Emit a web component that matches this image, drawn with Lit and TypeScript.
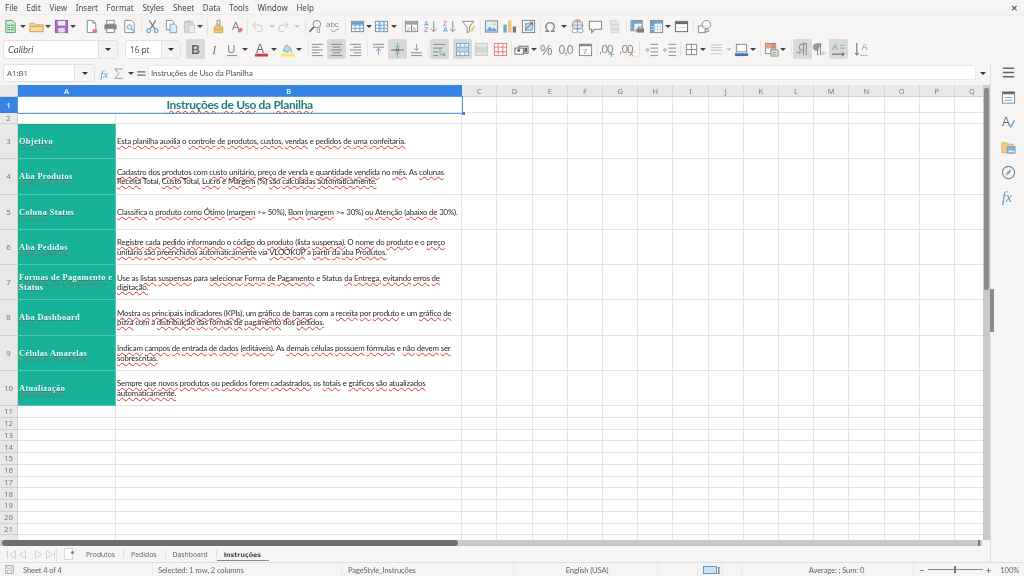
import { LitElement, html, css, svg } from "lit";
import { customElement } from "lit/decorators.js";

const G = "#767676", B = "#5a9bcf", LB = "#b4d2ea", R = "#d96a6a", Y = "#f0c060";
const lines = (ys: number[], x1: number, x2: number, c = G) =>
  ys.map((y) => svg`<path d="M${x1} ${y}H${x2}" stroke=${c} fill="none"/>`);
const tbl = (hl: string) => svg`<rect x="1.500" y="2.500" width="13" height="11" fill="#fff" stroke=${G}/>
  ${hl === "r" ? svg`<rect x="2" y="3" width="12" height="3" fill=${B}/>` : svg`<rect x="5" y="3" width="3" height="10" fill=${LB}/><rect x="10" y="3" width="2" height="10" fill=${LB}/>`}
  <path d="M1.500 6.500h13M1.500 10h13M5.500 2.500v11M10.500 2.500v11" stroke=${B} fill="none"/>`;

const icons: Record<string, unknown> = {
  new: svg`<path d="M3 1.500h7l3 3v10H3z" fill="#cfe8cf" stroke="#3f9a52"/><rect x="4.500" y="6" width="7" height="6" fill="#43a85a"/><path d="M4.500 8h7M4.500 10h7M8 6v6" stroke="#e8f6ea"/>`,
  open: svg`<path d="M1 4.500h5l1.500 1.500H15v7.500H1z" fill="#f4c878" stroke="#d2a04c"/><path d="M1 8h14v5.500H1z" fill="#f8d89a" stroke="#d2a04c"/>`,
  save: svg`<rect x="1.500" y="1.500" width="13" height="13" fill="#9a5cb8" stroke="#7e4799"/><rect x="4" y="2" width="8" height="5" fill="#f1e8f5"/><rect x="4.500" y="9.500" width="7" height="5" fill="#e4d4ec"/>`,
  pdf: svg`<path d="M3.500 1.500h6l3 3v10h-9z" fill="#fff" stroke=${G}/><path d="M9.500 1.500v3h3" fill="none" stroke=${G}/><path d="M9 11h5v3.500H9z" fill=${R}/>`,
  print: svg`<rect x="4" y="1.500" width="8" height="4" fill="#fff" stroke=${G}/><rect x="1.500" y="5.500" width="13" height="6" rx="1.500" fill="#757575"/><rect x="4" y="10" width="8" height="4.500" fill="#fff" stroke=${G}/>`,
  prev: svg`<path d="M3 1.500h7l3 3v10H3z" fill="#fff" stroke=${G}/><circle cx="8" cy="8.500" r="2.500" fill="#d8ebf7" stroke=${B}/><path d="M10 10.500l2.500 2.500" stroke=${B} fill="none" stroke-width="1.300"/>`,
  cut: svg`<path d="M4.500 1.500l6 9M11.500 1.500l-6 9" stroke="#666" fill="none" stroke-width="1.200"/><circle cx="4" cy="12.500" r="2" fill="none" stroke=${B} stroke-width="1.300"/><circle cx="12" cy="12.500" r="2" fill="none" stroke=${B} stroke-width="1.300"/>`,
  copy: svg`<path d="M2.500 1.500h6l2 2v8h-8z" fill="#fff" stroke=${G}/><path d="M6.500 5.500h5l2 2v7h-7z" fill="#d8ebf7" stroke=${B}/>`,
  paste: svg`<rect x="2.500" y="2.500" width="9" height="11.500" fill="#d6d6d6" stroke="#bbb"/><rect x="5" y="1.500" width="4" height="2.500" fill="#bbb"/><rect x="7.500" y="6.500" width="6" height="8" fill="#ececec" stroke="#c4c4c4"/>`,
  clone: svg`<path d="M6.500 1.500h3v5h-3z" fill="#fff" stroke=${G}/><path d="M3.500 8.500c2-2 7-2 9 0v6h-9z" fill=${Y} stroke="#c99a40"/><path d="M3.500 11h9" stroke="#c99a40"/>`,
  clear: svg`<text x="2" y="12" font-size="12" font-family="Liberation Sans" fill=${G}>A</text><path d="M8 13l3-4 3 2-2.500 3.500H9z" fill=${R}/>`,
  undo: svg`<path d="M3 6.500h6.500a3.500 3.500 0 0 1 0 7H7M3 6.500l3.500-3.500M3 6.500L6.500 10" stroke="#cfcfcf" fill="none" stroke-width="1.300"/>`,
  redo: svg`<path d="M13 6.500H6.500a3.500 3.500 0 0 0 0 7H9M13 6.500L9.500 3M13 6.500L9.500 10" stroke="#cfcfcf" fill="none" stroke-width="1.300"/>`,
  find: svg`<circle cx="9.500" cy="5.500" r="4" fill="#f7f7f7" stroke=${G}/><path d="M6.500 8.500L1.500 13.500" stroke="#555" stroke-width="1.800"/><text x="9" y="15" font-size="7" font-family="Liberation Sans" fill=${G}>d</text>`,
  spell: svg`<text x="0" y="9" font-size="8.500" font-family="Liberation Sans" fill=${G}>abc</text><path d="M5 11l2.500 3L14 10" stroke=${B} fill="none"/>`,
  rows: tbl("r"),
  cols: tbl("c"),
  freezeh: svg`<rect x="1.500" y="2.500" width="13" height="11" fill="#fff" stroke=${G}/><rect x="2" y="3" width="12" height="3" fill="#999"/><text x="3" y="12.500" font-size="6" font-family="Liberation Sans" fill=${B}>2</text><text x="9" y="12.500" font-size="6" font-family="Liberation Sans" fill=${R}>A</text><path d="M8 6v7" stroke=${G}/>`,
  az: svg`<text x="1" y="7" font-size="7" font-weight="700" font-family="Liberation Sans" fill="#5aa3d8">A</text><text x="1" y="14" font-size="7" font-weight="700" font-family="Liberation Sans" fill="#b07fcf">Z</text><path d="M11.500 2v11M8.500 10.500l3 3 3-3" stroke=${G} fill="none"/>`,
  za: svg`<text x="1" y="7" font-size="7" font-weight="700" font-family="Liberation Sans" fill="#b07fcf">Z</text><text x="1" y="14" font-size="7" font-weight="700" font-family="Liberation Sans" fill="#5aa3d8">A</text><path d="M11.500 2v11M8.500 10.500l3 3 3-3" stroke=${G} fill="none"/>`,
  filter: svg`<path d="M1.500 2.500h12L9 8.500v5l-2.500 1v-6z" fill="#fff" stroke=${G}/><path d="M10 12l4-5 1 1-3 6z" fill=${Y}/>`,
  image: svg`<rect x="1.500" y="2" width="13" height="12" fill="#dcecf7" stroke=${G}/><path d="M2 13l4-5 3 3 2-2 3 4z" fill=${B}/><circle cx="11" cy="5.500" r="1.300" fill=${Y}/>`,
  chart: svg`<rect x="1.500" y="6" width="3.500" height="8.500" fill=${B}/><rect x="6.500" y="1.500" width="3.500" height="13" fill=${Y}/><rect x="11.500" y="8" width="3.500" height="6.500" fill="#666"/>`,
  pivot: svg`<rect x="1.500" y="1.500" width="13" height="13" fill="#f4f4f4" stroke=${G}/><rect x="5" y="5" width="7" height="7" fill=${LB} stroke=${B}/><path d="M4 12l8-8M9 3.500h3.500V7" stroke="#555" fill="none"/>`,
  omega: svg`<text x="0.500" y="14" font-size="15.500" font-family="DejaVu Sans" fill=${G}>Ω</text>`,
  link: svg`<circle cx="8" cy="6.500" r="5.500" fill="#e8e8e8" stroke=${G}/><path d="M2.500 6.500h11M8 1v11M4.500 3h7M4.500 10h7" stroke=${G} fill="none" stroke-width=".7"/><rect x="2" y="10.500" width="6" height="4" rx="2" fill="#fff" stroke=${B}/><rect x="8" y="10.500" width="6" height="4" rx="2" fill="#fff" stroke=${B}/>`,
  comment: svg`<path d="M1.500 2.500h13v8.500H7l-3 3.500V11H1.500z" fill="#fff" stroke=${G} stroke-width="1.100"/>`,
  hf: svg`<path d="M3.500 1.500h6.500l2.500 2.500v10.500h-9z" fill="#e2e2e2" stroke="#d0d0d0"/><path d="M5 6h6M5 11h6" stroke="#c4c4c4"/>`,
  area: svg`<rect x="1" y="1.500" width="12" height="11" fill="#e8f2fa" stroke=${G}/><rect x="1.500" y="2" width="11" height="3" fill=${B}/><rect x="1.500" y="2" width="3" height="10" fill=${B}/><path d="M7 10h8v4.500H7z" fill="#6f6f6f"/><rect x="9" y="8.500" width="4" height="2" fill="#fff" stroke=${G}/>`,
  freeze: svg`<rect x="1.500" y="1.500" width="13" height="13" fill="#fff" stroke=${G}/><rect x="2" y="2" width="12" height="3" fill=${B}/><rect x="2" y="2" width="4" height="12" fill=${B}/><path d="M2 8h12M2 11h12M9 5v9M12 5v9" stroke=${LB} fill="none"/>`,
  split: svg`<rect x="1.500" y="2.500" width="13" height="11" fill="#fff" stroke="#555"/><rect x="2" y="3" width="12" height="2.500" fill="#555"/><path d="M3 9h10" stroke=${LB} stroke-dasharray="2 1"/>`,
  shapes: svg`<path d="M1.500 7.500h8v7h-8z" fill="#fff" stroke=${G}/><circle cx="10" cy="6" r="4.500" fill="#fff" fill-opacity=".6" stroke=${G}/><path d="M8 13l2.500-3 2.500 3z" fill="#fff" stroke=${G}/>`,
  B: svg`<text x="3.500" y="13" font-size="13" font-weight="700" font-family="Liberation Sans" fill="#555">B</text>`,
  I: svg`<text x="5.500" y="13" font-size="13" font-style="italic" font-family="Liberation Serif" fill="#666">I</text>`,
  U: svg`<text x="2.500" y="12" font-size="12" font-family="Liberation Sans" fill="#55779a">U</text><path d="M2 14.500h11" stroke="#55779a"/>`,
  fc: svg`<text x="2" y="11.500" font-size="13" font-family="Liberation Sans" fill="#555">A</text><rect x="1" y="12.500" width="14" height="3" fill="#c62828"/>`,
  bg: svg`<path d="M3 9l4-6 5 4-4 4z" fill=${LB} stroke=${B}/><path d="M11 8c1 1.500 2 2 1 3.500" stroke="#888" fill="none"/><rect x="1" y="12.500" width="14" height="3" fill="#f4ee3a"/>`,
  al: svg`${lines([5.5, 11.5], 2, 10)}<path d="M2 2.500h12M2 8.500h12M2 14.500h12" stroke=${G}/>`,
  ac: svg`${lines([5.5, 11.5], 4, 12)}<path d="M2 2.500h12M2 8.500h12M2 14.500h12" stroke=${G}/>`,
  ar: svg`${lines([5.5, 11.5], 6, 14)}<path d="M2 2.500h12M2 8.500h12M2 14.500h12" stroke=${G}/>`,
  vt: svg`<path d="M2 2.500h12M2 5.500h12" stroke=${G}/><path d="M8 14V7M5.500 9.500L8 7l2.500 2.500" stroke=${B} fill="none"/>`,
  vc: svg`<path d="M1 8.500h14" stroke=${G} stroke-width="1.300"/><path d="M8 1v5M8 16v-5M5.500 4L8 6.500 10.500 4M5.500 13L8 10.500 10.500 13" stroke=${B} fill="none"/><rect x="6" y="7" width="4" height="3" fill=${G}/>`,
  vb: svg`<path d="M2 11.500h12M2 14.500h12" stroke=${G}/><path d="M8 2v7M5.500 6.500L8 9l2.500-2.500" stroke=${B} fill="none"/>`,
  wrap: svg`<path d="M1.500 2.500h13M1.500 6.500h10M1.500 10.500h5M1.500 14.500h5" stroke=${G}/><path d="M8.500 7v6M8.500 13.500h6M11 11l3.500 2.500L11 15" stroke=${B} fill="none"/>`,
  merge: svg`<rect x="1.500" y="1.500" width="13" height="13" fill="#fff" stroke=${B}/><rect x="2" y="6" width="12" height="4" fill=${LB}/><path d="M1.500 5.500h13M1.500 10.500h13M5.500 2v3M10.500 2v3M5.500 11v3M10.500 11v3" stroke=${B}/>`,
  mergeg: svg`<rect x="1.500" y="1.500" width="13" height="13" fill="#e6e6e6" stroke="#c4c4c4"/><path d="M1.500 5.500h13M1.500 10.500h13" stroke="#c4c4c4"/><rect x="2" y="6" width="12" height="4" fill="#d2d2d2"/>`,
  unmerge: svg`<rect x="1.500" y="1.500" width="13" height="13" fill="#fff" stroke=${R}/><path d="M1.500 5.500h13M1.500 10.500h13M5.500 2v12M10.500 2v12" stroke=${R}/>`,
  cur: svg`<rect x="5" y="4.500" width="10" height="7.500" fill="#fff" stroke="#555"/><rect x="1" y="6.500" width="9" height="6.500" fill="#fff" stroke="#555"/><circle cx="5" cy="9" r="1.500" fill="#444"/><rect x="11" y="6" width="3" height="5" fill="#555"/>`,
  pct: svg`<text x="0" y="13.500" font-size="15" font-family="Liberation Sans" fill=${G}>%</text>`,
  num: svg`<text x="-.5" y="13" font-size="13" letter-spacing="-1" font-family="Liberation Sans" fill=${G}>0,0</text>`,
  date: svg`<rect x="1.500" y="2.500" width="13" height="12" fill="#fff" stroke=${G}/><rect x="1.500" y="2" width="13" height="2.500" fill=${G}/><text x="5" y="13" font-size="8.500" font-family="Liberation Sans" fill=${G}>7</text>`,
  addd: svg`<text x="-1" y="12" font-size="12.500" letter-spacing="-1" font-family="Liberation Sans" fill=${G}>,00</text><path d="M12 10v6M9 13h6" stroke=${B}/>`,
  deld: svg`<text x="-1" y="12" font-size="12.500" letter-spacing="-1" font-family="Liberation Sans" fill=${G}>,00</text><path d="M9.500 10.500l5 5M14.500 10.500l-5 5" stroke=${R}/>`,
  ind: svg`<path d="M7 2.500h8M7 6.500h8M7 10.500h8M7 14.500h8" stroke=${G}/><path d="M1 8.500h4M3.500 6.500l2 2-2 2" stroke=${B} fill="none"/>`,
  out: svg`<path d="M7 2.500h8M7 6.500h8M7 10.500h8M7 14.500h8" stroke=${G}/><path d="M5.500 8.500h-4M3.500 6.500l-2 2 2 2" stroke=${B} fill="none"/>`,
  bord: svg`<rect x="2.500" y="2.500" width="11" height="11" fill="#fff" stroke=${G}/><path d="M8 2.500v11M2.500 8h11" stroke=${G}/>`,
  bsty: svg`<path d="M2 3h12M2 6h12M2 9h12M2 12.500h12" stroke="#c6c6c6" stroke-width="1.200"/>`,
  bcol: svg`<rect x="2.500" y="2.500" width="11" height="8" fill="#fff" stroke=${G}/><rect x="1" y="12" width="14" height="3" fill="#2a63a8"/>`,
  cond: svg`<rect x="1.500" y="1.500" width="11" height="11" fill="#fff" stroke=${G}/><rect x="2" y="2" width="5" height="5" fill="#e69a6a"/><rect x="7" y="7" width="5" height="5" fill="#7fb66b"/><rect x="7" y="2" width="5" height="5" fill="#d97a7a"/><rect x="7.500" y="8.500" width="7.500" height="6.500" fill="#fff" stroke=${G}/><path d="M9 11h4.500M9 13h4.500" stroke=${G}/>`,
  ltr: svg`<path d="M9 14V2M12 14V2M12.500 2H8a3.500 3.500 0 0 0 0 7h1" stroke=${G} fill="none"/><path d="M1 11h5M4 9l2 2-2 2" stroke=${B} fill="none"/>`,
  rtl: svg`<path d="M5 14V2M8 14V2M9 2H4a3.500 3.500 0 0 0 0 7h1" stroke=${G} fill="#999"/><path d="M14.500 12h-5M11.500 10l-2 2 2 2" stroke="#8fc0d8" fill="none"/>`,
  tdir: svg`<text x="1" y="8.500" font-size="9.500" font-family="Liberation Sans" fill=${B}>A</text><path d="M10 3.500h5M10 6.500h5" stroke=${G} stroke-dasharray="1.500 1"/><path d="M1 13h13M11.500 11l2.500 2-2.500 2" stroke="#444" fill="none"/>`,
  vdir: svg`<text x="8" y="8.500" font-size="9.500" font-family="Liberation Sans" fill=${B}>A</text><path d="M3 1v13M1 11.500l2 2.500 2-2.500" stroke="#444" fill="none"/><path d="M7 14.500h8" stroke=${G} stroke-dasharray="1.500 1"/>`,
  fx: svg`<text x="1.500" y="13" font-size="14" font-style="italic" font-family="Liberation Serif" fill="#4a90c8">fx</text>`,
  sum: svg`<path d="M12.500 3.500v-1h-9l5 5.500-5 6h9v-1" stroke=${G} fill="none"/>`,
  eq: svg`<path d="M3 6h10M3 10h10" stroke="#555" stroke-width="1.400"/>`,
  side: svg`<path d="M2 3.500h12M2 8h12M2 12.500h12" stroke="#555" stroke-width="1.500"/>`,
  props: svg`<rect x="1.500" y="2" width="13" height="12" fill="#fff" stroke=${G}/><rect x="1.500" y="2" width="13" height="2.500" fill="#555"/><path d="M4 8h8M4 11h8" stroke=${B}/>`,
  sty: svg`<text x="1" y="11.500" font-size="13" font-family="Liberation Sans" fill="#5a5a5a">A</text><path d="M9 13l5-8 1 .8-4.500 8z" fill=${B}/>`,
  gal: svg`<path d="M1 3h5l1.500 1.500H13v9H1z" fill="#f4c878" stroke="#d2a04c"/><rect x="6.500" y="7" width="8.500" height="7" fill="#6ea6d2" stroke=${B}/><path d="M7 13l3-3 2 2 1.500-1 1 2z" fill="#dcecf7"/>`,
  nav: svg`<circle cx="8" cy="8" r="6.500" fill="#f4f4f4" stroke=${G} stroke-width="1.200"/><path d="M11.500 4.500L9 9 4.500 11.500 7 7z" fill=${B}/>`,
  fxs: svg`<text x="1" y="13" font-size="15" font-style="italic" font-family="Liberation Serif" fill="#3d8ac4">fx</text>`,
  disk: svg`<rect x="2" y="2" width="12" height="12" fill="none" stroke="#999"/><rect x="4.500" y="2" width="7" height="4" fill="none" stroke="#999"/><rect x="4.500" y="9" width="7" height="5" fill="none" stroke="#999"/>`,
};

const ic = (n: string, cls = "ic") => html`<svg class=${cls} viewBox="0 0 16 16">${icons[n]}</svg>`;

const navArrows = html`<svg class="navsvg" viewBox="0 0 52 13">
  <g fill="none" stroke="#d2d2d2">
    <path d="M2.500 2.500v8M10.500 2.500l-6 4 6 4z"/>
    <path d="M20.500 2.500l-6 4 6 4z"/>
    <path d="M30.500 2.500l6 4-6 4z"/>
    <path d="M41.500 2.500l6 4-6 4zM49.500 2.500v8"/>
  </g>
</svg>`;

type Item = [string, number, boolean?];
const row1: Item[] = [["new",10],["a",23],["open",36],["a",48],["save",61],["a",73],["pdf",91],["print",110],["prev",129],["|",141],["cut",152],["copy",171],["paste",189],["a",200],["|",207],["clone",218],["clear",237],["|",247],["undo",257],["ag",272],["redo",283],["ag",297],["|",305],["find",315],["spell",333],["|",345],["rows",357],["a",369],["cols",381],["a",394],["|",402],["freezeh",411],["az",430],["za",449],["filter",468],["|",480],["image",491],["chart",509],["pivot",528],["|",540],["omega",551],["a",564],["link",577],["comment",595],["hf",614],["|",626],["area",637],["freeze",656],["a",668],["split",681],["|",693],["shapes",704]];
const row2: Item[] = [["B",195,true],["I",214],["U",232],["a",245],["fc",261],["a",274],["bg",287],["a",299],["|",308],["al",317],["ac",336,true],["ar",355],["|",367],["vt",378],["vc",397,true],["vb",416],["|",428],["wrap",439,true],["merge",462,true],["mergeg",481],["unmerge",500],["|",511],["cur",521],["a",534],["pct",547],["num",566],["date",585],["|",597],["addd",607],["deld",627],["|",639],["ind",651],["out",669],["|",680],["bord",691],["a",703],["bsty",716],["ag",729],["bcol",741],["a",753],["|",760],["cond",771],["a",783],["|",791],["ltr",802,true],["rtl",820],["|",830],["tdir",838,true],["vdir",861]];

const strip = (items: Item[], start: number) => {
  let cur = start;
  return items.map(([n, x, on]) => {
    const w = n === "a" || n === "ag" ? 6 : n === "|" ? 1 : 19;
    const left = x - w / 2 - cur;
    cur = x + w / 2;
    const m = `margin-left:${left}px`;
    if (n === "a" || n === "ag") return html`<span class="caret ${n === "ag" ? "dim" : ""}" style=${m}></span>`;
    if (n === "|") return html`<span class="sep" style=${m}></span>`;
    return html`<span class="btn ${on ? "on" : ""}" style=${m}>${ic(n)}</span>`;
  });
};

const menus = ["File","Edit","View","Insert","Format","Styles","Sheet","Data","Tools","Window","Help"];
const colLetters = "CDEFGHIJKLMNOPQ".split("");

const word = (t: string) => t.split(" ").map((w, i) => {
  const sp = i ? " " : "";
  const m = /^(\(?)~(.*)$/.exec(w);
  return m ? html`${sp}${m[1]}<span class="sp">${m[2]}</span>` : html`${sp}${w}`;
});

const data: [string[], string[]][] = [
  [["~Objetivo"], ["~Esta ~planilha ~auxilia o ~controle ~de ~produtos, ~custos, ~vendas e ~pedidos ~de ~uma ~confeitaria."]],
  [["~Aba ~Produtos"], ["~Cadastro dos ~produtos com ~custo ~unitário, ~preço ~de ~venda e ~quantidade ~vendida no ~mês. As ~colunas", "~Receita Total, ~Custo Total, ~Lucro e ~Margem (%) ~são ~calculadas ~automaticamente."]],
  [["~Coluna Status"], ["~Classifica o ~produto ~como ~Ótimo (~margem >= 50%), ~Bom (~margem >= 30%) ~ou ~Atenção (~abaixo ~de 30%)."]],
  [["~Aba ~Pedidos"], ["~Registre ~cada ~pedido ~informando o ~código do ~produto (~lista ~suspensa). O ~nome do ~produto e o ~preço", "~unitário ~são ~preenchidos ~automaticamente via ~VLOOKUP a ~partir ~da ~aba ~Produtos."]],
  [["~Formas ~de ~Pagamento e", "Status"], ["Use as ~listas ~suspensas para ~selecionar ~Forma ~de ~Pagamento e Status ~da ~Entrega, ~evitando ~erros ~de", "~digitação."]],
  [["~Aba Dashboard"], ["~Mostra ~os ~principais ~indicadores (~KPIs), um ~gráfico ~de ~barras com a ~receita ~por ~produto e um ~gráfico ~de", "~pizza com a ~distribuição ~das ~formas ~de ~pagamento dos ~pedidos."]],
  [["~Células ~Amarelas"], ["~Indicam ~campos ~de ~entrada ~de ~dados (~editáveis). As ~demais ~células ~possuem ~fórmulas e ~não ~devem ~ser", "~sobrescritas."]],
  [["~Atualização"], ["~Sempre ~que ~novos ~produtos ~ou ~pedidos ~forem ~cadastrados, os ~totais e ~gráficos ~são ~atualizados", "~automaticamente."]],
];

@customElement("app-root")
export class AppRoot extends LitElement {
  static styles = css`
    :host { display: flex; flex-direction: column; width: 1024px; height: 576px; overflow: hidden; background: #f6f5f4; color: #444; font-family: "Noto Sans", sans-serif; filter: blur(0.3px); }
    * { box-sizing: border-box; }
    .menu { height: 14px; flex: none; display: flex; align-items: center; padding-left: 5px; gap: 8.700px; font-size: 8px; color: #4a4a4a; }
    .close { margin-left: auto; margin-right: 6px; font-size: 8px; font-weight: 700; color: #555; }
    .tb { display: flex; align-items: center; flex: none; }
    .tb1 { height: 24px; border-top: 1px solid #ebebeb; }
    .tb2 { height: 22px; }
    .gap4 { height: 4px; flex: none; }
    .btn { width: 19px; height: 20px; flex: none; display: flex; align-items: center; justify-content: center; border-radius: 2px; }
    .btn.on { background: #d9d9d8; }
    .ic { width: 15px; height: 15px; display: block; opacity: .88; }
    .caret { flex: none; width: 6px; height: 3px; border-left: 3px solid transparent; border-right: 3px solid transparent; border-top: 3px solid #444; }
    .caret.dim { border-top-color: #c8c8c8; }
    .sep { width: 1px; height: 16px; flex: none; background: #e6e5e4; }
    .combo { height: 19px; flex: none; background: #fff; border: 1px solid #e2e1e0; border-radius: 3px; display: flex; align-items: center; font-size: 8.200px; color: #555; }
    .combo .val { flex: 1; padding-left: 4px; white-space: nowrap; }
    .combo .dd { height: 100%; background: #f4f3f2; border-left: 1px solid #e2e1e0; display: flex; align-items: center; justify-content: center; }
    .font { width: 115px; margin-left: 3px; font-style: italic; font-family: "Lato", sans-serif; font-size: 9.500px; }
    .font .dd { width: 19px; }
    .size { width: 56px; margin-left: 7px; }
    .size .dd { width: 19px; }
    .dd i { display: block; width: 0; height: 0; border-left: 3.500px solid transparent; border-right: 3.500px solid transparent; border-top: 3.500px solid #333; }

    .body { flex: 1; display: flex; min-height: 0; }
    .left { width: 991px; flex: none; display: flex; flex-direction: column; border-right: 1px solid #e2e1e0; position: relative; }
    .side { flex: 1; display: flex; flex-direction: column; align-items: center; padding-top: .5px; gap: 10.200px; padding-left: 1px; }

    .handle { position: absolute; right: -4px; top: 225px; width: 4px; height: 43px; background: #8a8a8a; border-radius: 1px; }

    .fbar { height: 21px; flex: none; display: flex; align-items: flex-start; }
    .name { width: 92px; height: 18px; margin-left: 3px; }
    .name .dd { width: 19px; border-left: none; background: #f6f5f4; }
    .name .val { border-right: 1px solid #e2e1e0; height: 100%; display: flex; align-items: center; padding-left: 3px; font-size: 7.800px; }
    .fx { margin-left: 4px; }
    .fbtn { width: 13px; height: 18px; display: flex; align-items: center; justify-content: center; flex: none; }
    .fbtn .ic { width: 13px; height: 13px; }
    .fbar .caret { align-self: center; margin: 0 1px 3px 3px; }
    .input { flex: 1; height: 15px; margin-top: 1px; background: #fff; border: 1px solid #ebeaea; border-radius: 2px; font-family: "Lato", sans-serif; font-size: 8.200px; letter-spacing: -.12px; color: #555; padding-left: 2px; display: flex; align-items: center; }
    .fdrop { width: 14px; height: 18px; display: flex; align-items: center; justify-content: center; flex: none; }
    .fdrop i { display: block; border-left: 3.500px solid transparent; border-right: 3.500px solid transparent; border-top: 3.500px solid #333; }

    .area { flex: 1; display: flex; min-height: 0; }
    .gridwrap { width: 983px; flex: none; overflow: hidden; position: relative; background: #fff; }
    .grid { display: grid; grid-template-columns: 18px 98px 346.300px repeat(15, 35.200px); grid-template-rows: 12px 16px 11px repeat(8, 35.250px) repeat(12, 11.750px); width: max-content; }
    .cell { border-right: 1px solid #e4e4e4; border-bottom: 1px solid #e4e4e4; min-width: 0; }
    .hd { background: #e8e8e7; color: #777; font-size: 7.500px; display: flex; align-items: center; justify-content: center; border-right: 1px solid #d4d4d4; border-bottom: 1px solid #d0d0d0; }
    .hd.sel { background: #3584e4; color: #e8f1fb; font-weight: 600; border-color: #3584e4; }
    .rowh { font-size: 7.800px; }
    .corner { background: #e8e8e7; }
    .title { grid-column: 2 / 4; display: flex; align-items: center; justify-content: center; font-family: "Lato", sans-serif; font-weight: 700; font-size: 12px; letter-spacing: -.34px; color: #1f8279; padding-bottom: 1px; }
    .label { background: #17b298; color: #f2fbf8; font-family: "Liberation Serif", serif; font-weight: 700; font-size: 8.400px; letter-spacing: .35px; line-height: 10px; padding: 2px 0 0 1px; display: flex; flex-direction: column; justify-content: center; border-color: #55c8b3; white-space: nowrap; text-shadow: 0 .5px .5px rgba(40,70,60,.45); }
    .label .sp { text-decoration-color: rgba(230,120,110,.5); }
    .desc { font-family: "Lato", sans-serif; font-size: 7.900px; letter-spacing: -.19px; line-height: 9.600px; color: #2a2a2a; padding: 2px 0 0 1px; display: flex; flex-direction: column; justify-content: center; white-space: nowrap; overflow: hidden; }
    .sp { text-decoration: underline wavy #d33; text-decoration-thickness: .6px; text-underline-offset: 1px; text-decoration-skip-ink: none; }
    .selbox { position: absolute; left: 17px; top: 11px; width: 446px; height: 17.500px; border: 1.500px solid #5b9bdc; pointer-events: none; }
    .selbox::after { content: ""; position: absolute; right: -2.500px; bottom: -2.500px; width: 3px; height: 3px; background: #3584e4; }

    .vs { width: 7px; flex: none; background: #c9c9c9; padding: 3px 1px 0; }
    .vs .thumb { display: block; width: 5px; height: 202px; background: #8b8b8b; border-radius: 2px; }
    .hsrow { height: 6px; flex: none; padding: 0 2px; background: #c9c9c9; display: flex; margin-right: 8px; align-items: stretch; }
    .hsrow .thumb { width: 456px; background: #6f6f6f; border-radius: 3px; }
    .hsrow .end { margin-left: auto; width: 2px; background: #777; }

    .tabs { height: 16px; flex: none; display: flex; align-items: center; font-size: 6.800px; color: #666; }
    .navs { margin-left: 5px; width: 52px; height: 13px; flex: none; border-right: 1px solid #e2e1e0; }
    .navsvg { width: 52px; height: 13px; display: block; }
    .addsheet { margin-left: 7px; width: 9px; height: 12px; flex: none; background: #fff; border: 1px solid #dcdcdc; position: relative; }
    .addsheet::after { content: ""; position: absolute; left: 6px; top: 2px; width: 3px; height: 3px; border-radius: 50%; background: #4a7fc0; }
    .tabsrow { display: flex; margin-left: 5px; align-items: center; height: 100%; }
    .tab { padding: 0 8px; height: 100%; display: flex; align-items: center; position: relative; white-space: nowrap; }
    .tab + .tab::before { content: ""; position: absolute; left: 0; top: 4px; bottom: 4px; width: 1px; background: #dedede; }
    .tab.act { font-family: "DejaVu Sans", sans-serif; font-weight: 700; font-size: 6.300px; color: #444; }
    .tab.act::after { content: ""; position: absolute; left: 1px; right: 0; bottom: 1px; height: 1px; background: #888; }

    .status { height: 14px; flex: none; border-top: 1px solid #e0dfde; display: flex; align-items: center; font-size: 7.600px; letter-spacing: -.13px; color: #666; font-family: "Lato", sans-serif; }
    .st { height: 100%; display: flex; align-items: center; border-right: 1px solid #ebeaea; white-space: nowrap; flex: none; }
    .st .ic { width: 11px; height: 11px; }
    .s1 { width: 153px; padding-left: 4px; gap: 8px; }
    .s2 { width: 189px; padding-left: 5px; }
    .s3 { width: 172px; padding-left: 6px; }
    .s4 { width: 144px; justify-content: center; padding-left: 3px; }
    .s5 { width: 40px; }
    .s5a { width: 25px; padding-left: 5px; gap: 0; }
    .s6 { width: 19px; }
    .s7 { width: 172px; justify-content: center; padding-left: 18px; }
    .slider { flex: 1; display: flex; align-items: center; padding-left: 5px; gap: 3px; color: #555; font-size: 10px; }
    .track { width: 55px; height: 1px; background: #888; position: relative; }
    .track::after { content: ""; position: absolute; left: 26px; top: -3px; width: 2px; height: 7px; background: #777; }
    .zoom { margin-left: 6px; font-size: 7.600px; color: #666; }
    .rect { width: 14px; height: 8px; flex: none; background: #cfe4f3; border: 1px solid #5a9ccc; }
    .ibeam { font-family: "Liberation Serif", serif; font-size: 11px; color: #666; line-height: 10px; }
  `;

  render() {
    const rowsAfter = Array.from({ length: 11 }, (_, i) => i + 11);
    const blanks = colLetters.map(() => html`<div class="cell"></div>`);
    return html`
      <div class="menu">${menus.map((m) => html`<span>${m}</span>`)}<span class="close">✕</span></div>
      <div class="tb tb1">${strip(row1, 0)}</div>
      <div class="tb tb2">
        <div class="combo font"><span class="val">Calibri</span><span class="dd"><i></i></span></div>
        <div class="combo size"><span class="val">16 pt</span><span class="dd"><i></i></span></div>
        ${strip(row2, 181)}
      </div>
      <div class="gap4"></div>
      <div class="body">
        <div class="left">
          <div class="fbar">
            <div class="combo name"><span class="val">A1:B1</span><span class="dd"><i></i></span></div>
            <span class="fbtn fx">${ic("fx")}</span>
            <span class="fbtn">${ic("sum")}</span>
            <span class="caret"></span>
            <span class="fbtn">${ic("eq")}</span>
            <div class="input">Instruções de Uso da Planilha</div>
            <span class="fdrop"><i></i></span>
          </div>
          <div class="area">
            <div class="gridwrap">
              <div class="grid">
                <div class="hd corner"></div>
                <div class="hd sel">A</div>
                <div class="hd sel">B</div>
                ${colLetters.map((c) => html`<div class="hd">${c}</div>`)}

                <div class="hd sel rowh">1</div>
                <div class="cell title"><span><span class="sp">Instruções</span> <span class="sp">de</span> <span class="sp">Uso</span> da <span class="sp">Planilha</span></span></div>
                ${blanks}

                <div class="hd rowh">2</div>
                <div class="cell"></div><div class="cell"></div>
                ${blanks}

                ${data.map(([a, b], i) => html`
                  <div class="hd rowh">${i + 3}</div>
                  <div class="cell label">${a.map((l) => html`<div>${word(l)}</div>`)}</div>
                  <div class="cell desc">${b.map((l) => html`<div>${word(l)}</div>`)}</div>
                  ${blanks}`)}

                ${rowsAfter.map((n) => html`
                  <div class="hd rowh">${n}</div>
                  <div class="cell"></div><div class="cell"></div>
                  ${blanks}`)}

                <div class="hd rowh"></div>
                <div class="cell"></div><div class="cell"></div>
                ${blanks}
              </div>
              <div class="selbox"></div>
            </div>
            <div class="vs"><span class="thumb"></span></div>
          </div>
          <div class="hsrow"><span class="thumb"></span><span class="end"></span></div>
          <div class="tabs">
            <div class="navs">${navArrows}</div>
            <div class="addsheet"></div>
            <div class="tabsrow">
              <div class="tab">Produtos</div>
              <div class="tab">Pedidos</div>
              <div class="tab">Dashboard</div>
              <div class="tab act">Instruções</div>
            </div>
          </div>
          <div class="handle"></div>
        </div>
        <div class="side">
          ${["side", "props", "sty", "gal", "nav", "fxs"].map((n) => ic(n))}
        </div>
      </div>
      <div class="status">
        <div class="st s1">${ic("disk")}<span>Sheet 4 of 4</span></div>
        <div class="st s2">Selected: 1 row, 2 columns</div>
        <div class="st s3">PageStyle_Instruções</div>
        <div class="st s4">English (USA)</div>
        <div class="st s5"></div>
        <div class="st s5a"><span class="rect"></span><span class="ibeam">I</span></div>
        <div class="st s6"></div>
        <div class="st s7">Average: ; Sum: 0</div>
        <div class="slider"><span>−</span><span class="track"></span><span>+</span><span class="zoom">100%</span></div>
      </div>
    `;
  }
}
